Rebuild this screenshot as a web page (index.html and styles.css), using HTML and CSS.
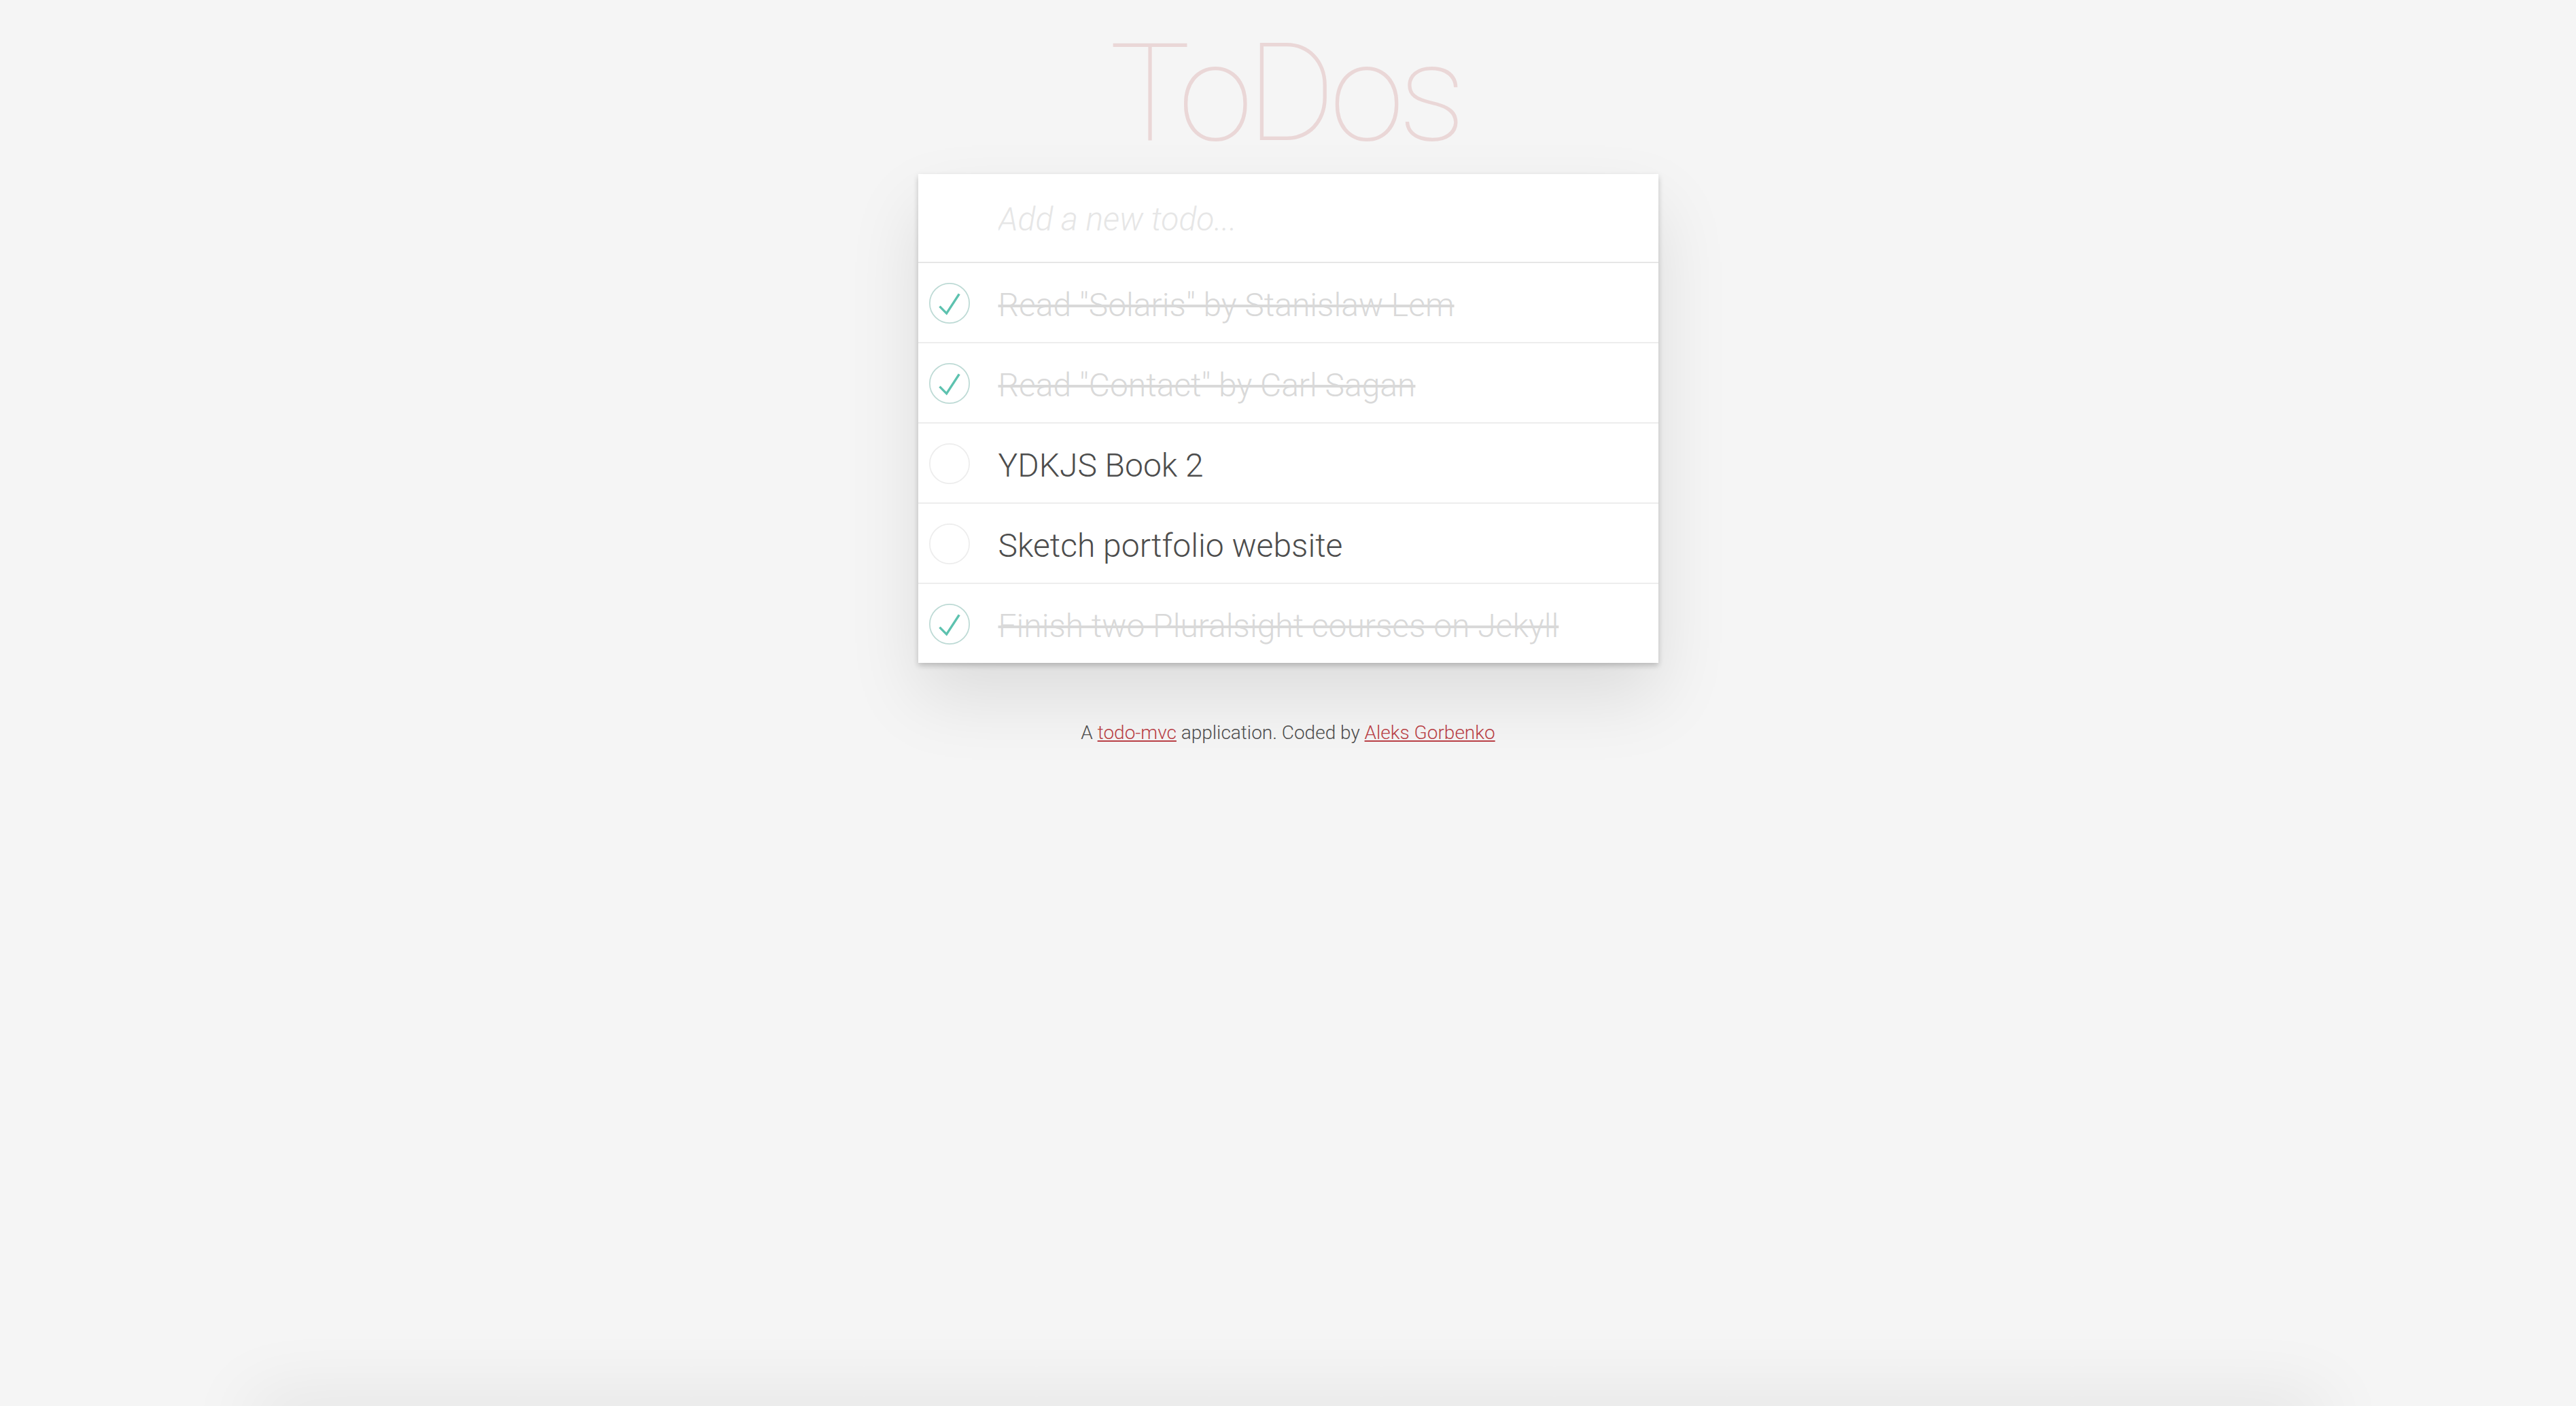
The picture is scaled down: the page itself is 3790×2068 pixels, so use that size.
FILE: index.html
```html
<!DOCTYPE html>
<html lang="en">
<head>
<meta charset="utf-8">
<title>ToDos</title>
<link rel="stylesheet" href="styles.css">
</head>
<body>
<main class="page">
  <h1 class="title">ToDos</h1>
  <section class="todoapp">
    <header class="entry">
      <input class="new-todo" type="text" placeholder="Add a new todo...">
    </header>
    <ul class="todo-list">
      <li class="todo done">
        <svg class="check" viewBox="-1.5 -1.5 103 103" width="60" height="60"><circle cx="50" cy="50" r="50" fill="none" stroke="#bddad5" stroke-width="3"/><path fill="#5dc2af" d="M72 25L42 71 27 56l-4 4 20 20 34-52z"/></svg>
        <span class="label">Read &quot;Solaris&quot; by Stanislaw Lem</span>
      </li>
      <li class="todo done">
        <svg class="check" viewBox="-1.5 -1.5 103 103" width="60" height="60"><circle cx="50" cy="50" r="50" fill="none" stroke="#bddad5" stroke-width="3"/><path fill="#5dc2af" d="M72 25L42 71 27 56l-4 4 20 20 34-52z"/></svg>
        <span class="label">Read &quot;Contact&quot; by Carl Sagan</span>
      </li>
      <li class="todo">
        <svg class="check" viewBox="-1.5 -1.5 103 103" width="60" height="60"><circle cx="50" cy="50" r="50" fill="none" stroke="#ededed" stroke-width="3"/></svg>
        <span class="label">YDKJS Book 2</span>
      </li>
      <li class="todo">
        <svg class="check" viewBox="-1.5 -1.5 103 103" width="60" height="60"><circle cx="50" cy="50" r="50" fill="none" stroke="#ededed" stroke-width="3"/></svg>
        <span class="label">Sketch portfolio website</span>
      </li>
      <li class="todo done">
        <svg class="check" viewBox="-1.5 -1.5 103 103" width="60" height="60"><circle cx="50" cy="50" r="50" fill="none" stroke="#bddad5" stroke-width="3"/><path fill="#5dc2af" d="M72 25L42 71 27 56l-4 4 20 20 34-52z"/></svg>
        <span class="label">Finish two Pluralsight courses on Jekyll</span>
      </li>
    </ul>
  </section>
  <footer class="info">A <a href="#">todo-mvc</a> application. Coded by <a href="#">Aleks Gorbenko</a></footer>
  <div class="page-edge"></div>
</main>
</body>
</html>
```
FILE: styles.css
```css
html, body {
  margin: 0;
  height: 100%;
  overflow: hidden;
}

body {
  background: #f5f5f5;
  font-family: Roboto, "Liberation Sans", Arial, sans-serif;
  font-weight: 300;
  color: #4d4d4d;
}

.page {
  height: 100%;
  display: flex;
  flex-direction: column;
  align-items: center;
}

.title {
  margin: 0 0 18px;
  padding-top: 38px;
  padding-right: 10px;
  height: 200px;
  font-size: 200px;
  line-height: 200px;
  font-weight: 100;
  letter-spacing: -9px;
  color: rgba(175, 47, 47, 0.15);
  text-align: center;
}

.todoapp {
  width: 1089px;
  background: #fff;
  box-shadow: 0 4px 8px 0 rgba(0, 0, 0, 0.2), 0 50px 100px 0 rgba(0, 0, 0, 0.1);
}

.entry {
  border-bottom: 2px solid #e6e6e6;
}

.new-todo {
  display: block;
  box-sizing: border-box;
  width: 100%;
  height: 129px;
  margin: 0;
  padding: 4px 32px 0 118px;
  border: 0;
  outline: none;
  background: transparent;
  font-family: Roboto, "Liberation Sans", Arial, sans-serif;
  font-size: 48px;
  font-weight: 300;
  color: #4d4d4d;
}

.new-todo::placeholder {
  font-style: italic;
  font-weight: 300;
  color: #e6e6e6;
}

.todo-list {
  list-style: none;
  margin: 0;
  padding: 0;
}

.todo {
  display: flex;
  align-items: center;
  height: 116px;
  border-bottom: 2px solid #ededed;
}

.todo:last-child {
  border-bottom: 0;
}

.check {
  flex: none;
  margin-left: 16px;
  margin-top: 2px;
}

.label {
  margin-left: 42px;
  padding-top: 8px;
  font-size: 48px;
  line-height: 58px;
  color: #4d4d4d;
}

.done .label {
  color: #d9d9d9;
  text-decoration: line-through;
}

.info {
  margin-top: 86px;
  font-size: 28px;
  line-height: 34px;
  color: #4d4d4d;
  text-align: center;
}

.info a {
  color: #b83f45;
  text-decoration: underline;
}

.page-edge {
  flex: none;
  margin-top: auto;
  margin-bottom: -40px;
  width: 3050px;
  height: 40px;
  background: #f5f5f5;
  box-shadow: 0 0 110px rgba(0, 0, 0, 0.14);
}
```
